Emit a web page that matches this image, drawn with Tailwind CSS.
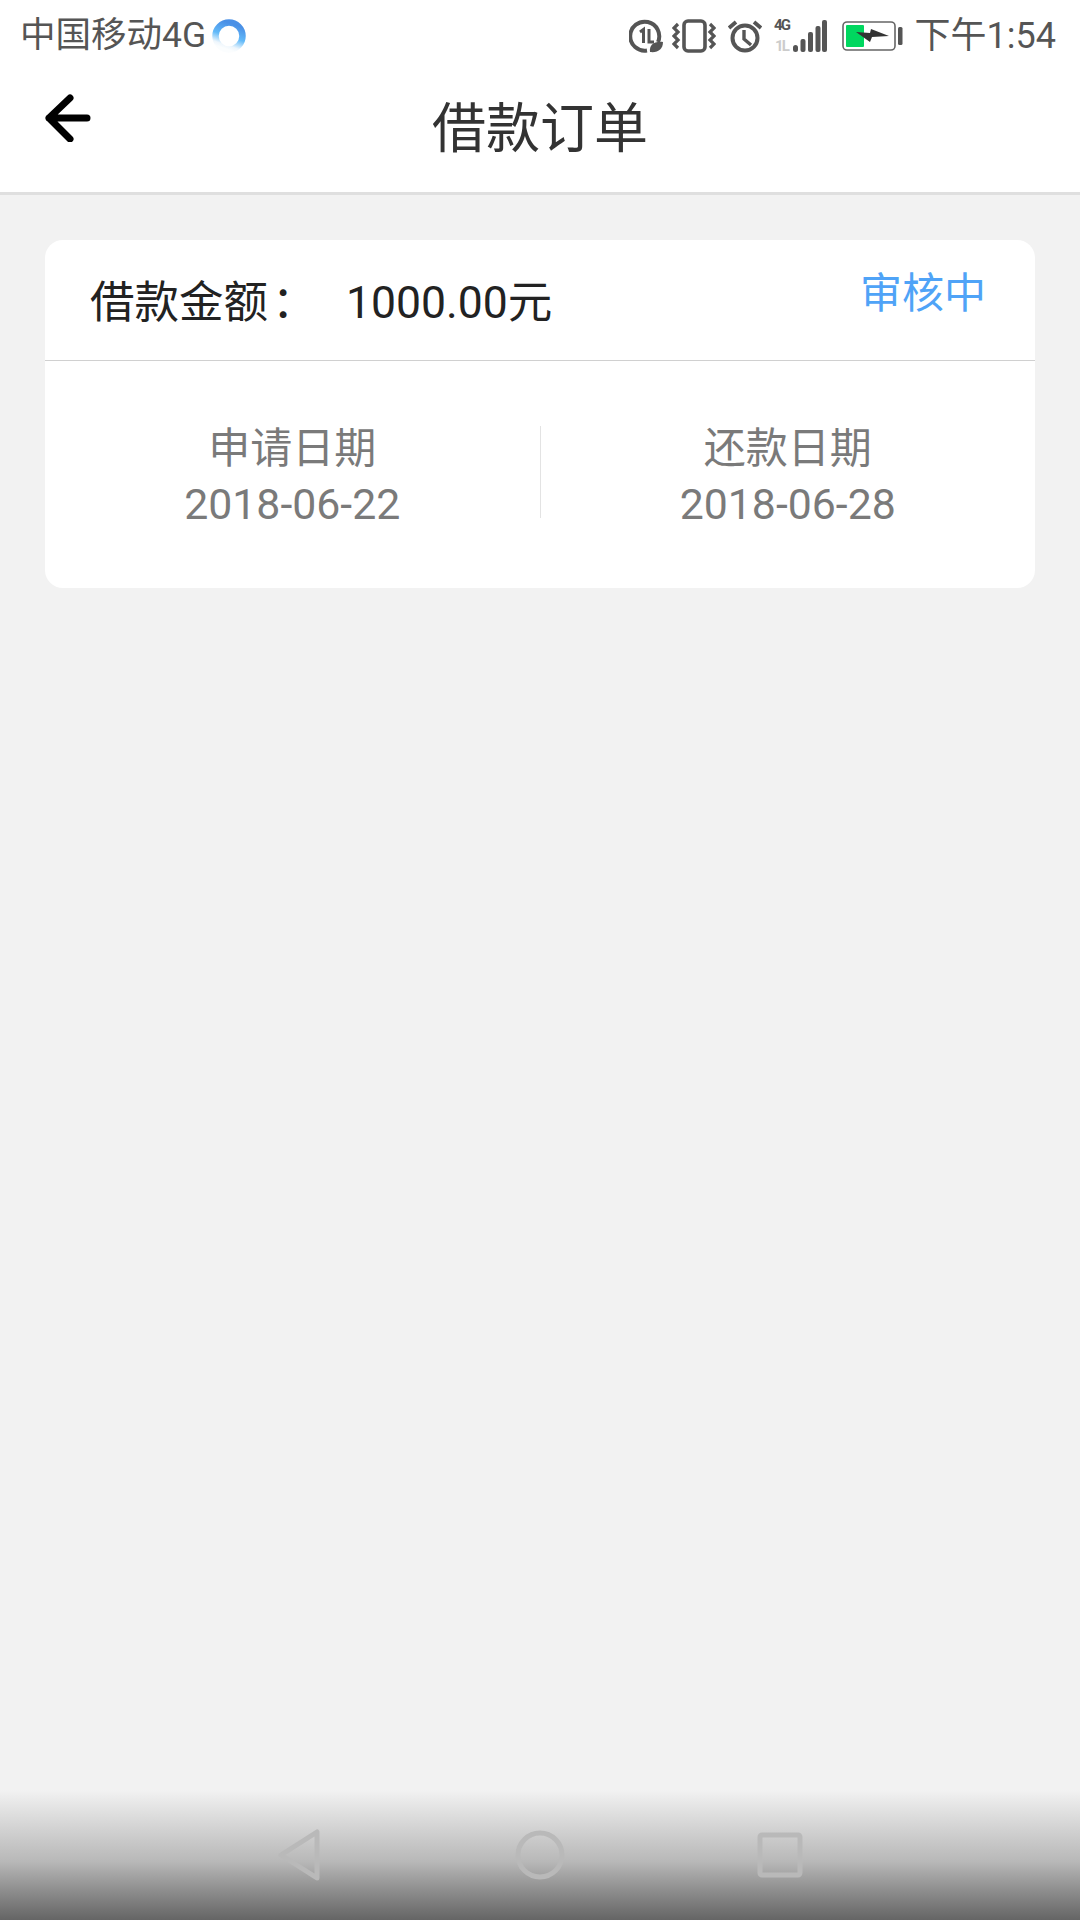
<!DOCTYPE html>
<html lang="zh-CN">
<head>
  <meta charset="UTF-8"/>
  <meta name="viewport" content="width=device-width, initial-scale=1.0"/>
  <title>借款订单</title>
  <script src="https://cdn.jsdelivr.net/npm/@tailwindcss/browser@4"></script>
</head>
<body class="bg-[#f2f2f2] font-['Roboto','Noto_Sans_CJK_SC',sans-serif]">
<div class="relative w-[1080px] h-[1920px] overflow-hidden flex flex-col">

  <!-- top bar -->
  <header class="h-[195px] bg-white border-b-[3px] border-[#dfdfdf] flex flex-col shrink-0">
    <div class="h-[72px] pl-[20px] pr-[24px] flex items-center justify-between text-[#555] text-[36px] leading-none">
      <div class="flex items-center">
        <span class="text-[35.500px]">中国移动4G</span>
        <svg class="ml-[6px]" width="34" height="34" viewBox="0 0 34 34">
          <defs>
            <linearGradient id="spin" x1="0.75" y1="0.1" x2="0.45" y2="1">
              <stop offset="0" stop-color="#4a90e6"/>
              <stop offset="0.5" stop-color="#62baf9"/>
              <stop offset="0.85" stop-color="#eef6fc"/>
              <stop offset="1" stop-color="#fbfdfe"/>
            </linearGradient>
          </defs>
          <circle cx="17" cy="17" r="13.500" fill="none" stroke="url(#spin)" stroke-width="6.500"/>
        </svg>
      </div>
      <div class="flex items-center">
        <svg width="34" height="34" viewBox="0 0 34 34" fill="none" stroke="#555" stroke-width="4">
          <path d="M29 23A14.500 14.500 0 1 0 18 31.500"/>
          <path d="M11 13l3.500-2.500V24M20 10v13h5" stroke-width="3"/>
          <path d="M21 33c-1-7 4-11 13-10 0 7-5 11-13 10z" fill="#555" stroke="none"/>
        </svg>
        <svg class="ml-[9px]" width="44" height="34" viewBox="0 0 44 34" fill="none" stroke="#555">
          <rect x="12" y="2" width="21" height="30" rx="4" stroke-width="3.600"/>
          <path d="M6 5L2 9l4 4-4 4 4 4-4 4 4 4" stroke-width="3.200"/>
          <path d="M38 5l4 4-4 4 4 4-4 4 4 4-4 4" stroke-width="3.200"/>
        </svg>
        <svg class="ml-[12px]" width="34" height="34" viewBox="0 0 34 34" fill="none" stroke="#555">
          <circle cx="17" cy="19" r="12.500" stroke-width="4"/>
          <path d="M16 11v9l7 6" stroke-width="3.400"/>
          <path d="M1 9l7-6M33 9l-7-6" stroke-width="3.800"/>
        </svg>
        <div class="ml-[11px] w-[18px] flex flex-col items-center font-bold leading-none tracking-tighter">
          <span class="text-[15px] text-[#555]">4G</span>
          <span class="text-[15px] text-[#ccc] mt-[6px]">1L</span>
        </div>
        <svg class="ml-[2px]" width="34" height="34" viewBox="0 0 34 34" fill="#555">
          <rect x="0" y="26" width="5" height="7" rx="2.500"/>
          <rect x="7.500" y="20" width="5" height="13" rx="2"/>
          <rect x="15" y="13" width="5" height="20" rx="2"/>
          <rect x="22.500" y="7" width="5" height="26" rx="2"/>
          <rect x="29" y="1" width="5" height="32" rx="2"/>
        </svg>
        <svg class="ml-[15px]" width="62" height="30" viewBox="0 0 62 30">
          <rect x="1" y="1" width="52" height="28" rx="4" fill="none" stroke="#666" stroke-width="1.600"/>
          <rect x="4" y="4" width="18" height="22" rx="1" fill="#00d75f"/>
          <path d="M14 11l14 1 1-4 18 7-17 1-2 5-14-10z" fill="#333"/>
          <rect x="56" y="6" width="4.500" height="18" rx="1.500" fill="#555"/>
        </svg>
        <span class="ml-[11px]">下午1:54</span>
      </div>
    </div>
    <div class="relative flex-1 flex items-center justify-center">
      <svg class="absolute left-[44px] top-[22px]" width="48" height="48" viewBox="0 0 48 48" fill="none" stroke="#000" stroke-width="7" stroke-linecap="round" stroke-linejoin="round">
        <path d="M43 24H5M26 4L5 24l21 21"/>
      </svg>
      <h1 class="text-[54px] leading-none text-[#333] font-normal mb-[4px]">借款订单</h1>
    </div>
  </header>

  <!-- order card -->
  <main class="flex-1 px-[45px] pt-[45px]">
    <div class="bg-white rounded-[18px] h-[348px] flex flex-col">
      <div class="h-[121px] border-b border-[#d0d0d0] pl-[45px] pr-[49px] flex justify-between shrink-0">
        <div class="flex items-center pt-[6px] text-[#222] text-[44.500px] leading-none">
          <span class="w-[256px]">借款金额<span class="ml-[4px]">：</span></span>
          <span>1000.00元</span>
        </div>
        <span class="text-[#4fa3f7] text-[42px] leading-none mt-[33px]">审核中</span>
      </div>
      <div class="flex pt-[65px] text-[#7a7a7a] text-[42px] text-center">
        <div class="flex-1 flex flex-col items-center -mt-[6px]">
          <span class="leading-[57px]">申请日期</span>
          <span class="leading-[54px] text-[42.800px]">2018-06-22</span>
        </div>
        <div class="w-px h-[92px] bg-[#e3e3e3]"></div>
        <div class="flex-1 flex flex-col items-center -mt-[6px]">
          <span class="leading-[57px]">还款日期</span>
          <span class="leading-[54px] text-[42.800px]">2018-06-28</span>
        </div>
      </div>
    </div>
  </main>

  <!-- android nav bar over the page -->
  <nav class="absolute left-0 bottom-0 w-full h-[130px] bg-gradient-to-b from-[#f2f2f2] via-[#b8b8b8] via-55% to-[#656565] flex items-center justify-center gap-[192px]">
    <svg width="46" height="54" viewBox="0 0 46 54" fill="none" stroke="#b9b9b9" stroke-width="5" stroke-linejoin="round">
      <path d="M40 4v46L4 27z"/>
    </svg>
    <svg width="50" height="50" viewBox="0 0 50 50" fill="none" stroke="#b9b9b9" stroke-width="5">
      <circle cx="25" cy="25" r="22"/>
    </svg>
    <svg width="46" height="46" viewBox="0 0 46 46" fill="none" stroke="#b9b9b9" stroke-width="5" stroke-linejoin="round">
      <rect x="3" y="3" width="40" height="40" rx="2"/>
    </svg>
  </nav>
</div>
</body>
</html>
